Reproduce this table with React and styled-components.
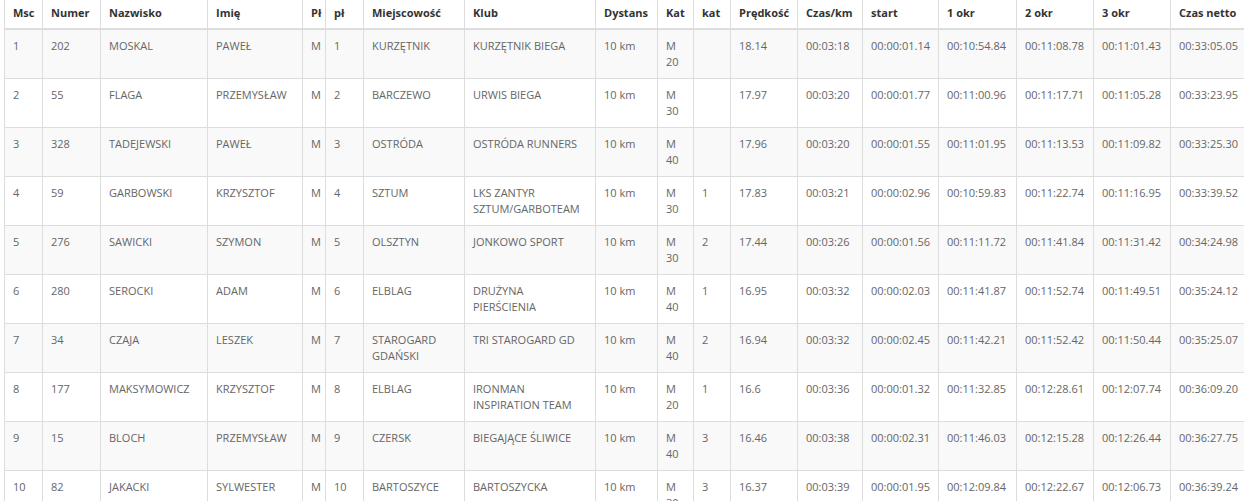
import React from "react";
import styled, {createGlobalStyle} from "styled-components";

const GlobalStyle = createGlobalStyle`
  html, body {
    margin: 0;
    padding: 0;
    background: #fff;
  }
  body {
    font-family: "Open Sans", "Liberation Sans", sans-serif;
    font-size: 11px;
    line-height: 16px;
    color: #666;
  }
`;

const Page = styled.div`
  width: 1244px;
  height: 501px;
  overflow: hidden;
  padding-left: 4px;
  box-sizing: border-box;
`;

const Table = styled.table`
  width: 1247px;
  table-layout: fixed;
  border-collapse: collapse;
  border-spacing: 0;
  border-left: 1px solid #ddd;
`;

const Col = styled.col`
  width: ${(p) => p.$w}px;
`;

const HeadCell = styled.th`
  padding: 5px 8px 7px;
  text-align: left;
  font-weight: 700;
  color: #333;
  white-space: nowrap;
  border-left: 1px solid #ddd;
  border-bottom: 2px solid #ddd;
  vertical-align: bottom;
`;

const Row = styled.tr`
  background: ${(p) => (p.$striped ? "#f9f9f9" : "#fff")};
`;

const Cell = styled.td`
  padding: 8px;
  height: 32px;
  vertical-align: top;
  border: 1px solid #ddd;
  border-top: 0;
`;

const columns = [
    ["Msc", 38], ["Numer", 58], ["Nazwisko", 107], ["Imię", 95], ["Pł", 23], ["pł", 38],
    ["Miejscowość", 101], ["Klub", 131], ["Dystans", 62], ["Kat", 36], ["kat", 37],
    ["Prędkość", 67], ["Czas/km", 65], ["start", 76], ["1 okr", 78], ["2 okr", 77],
    ["3 okr", 77], ["Czas netto", 80],
];

const results = [
    ["1", "202", "MOSKAL", "PAWEŁ", "M", "1", "KURZĘTNIK", "KURZĘTNIK BIEGA", "10 km", "M 20", "", "18.14", "00:03:18", "00:00:01.14", "00:10:54.84", "00:11:08.78", "00:11:01.43", "00:33:05.05"],
    ["2", "55", "FLAGA", "PRZEMYSŁAW", "M", "2", "BARCZEWO", "URWIS BIEGA", "10 km", "M 30", "", "17.97", "00:03:20", "00:00:01.77", "00:11:00.96", "00:11:17.71", "00:11:05.28", "00:33:23.95"],
    ["3", "328", "TADEJEWSKI", "PAWEŁ", "M", "3", "OSTRÓDA", "OSTRÓDA RUNNERS", "10 km", "M 40", "", "17.96", "00:03:20", "00:00:01.55", "00:11:01.95", "00:11:13.53", "00:11:09.82", "00:33:25.30"],
    ["4", "59", "GARBOWSKI", "KRZYSZTOF", "M", "4", "SZTUM", "LKS ZANTYR SZTUM/GARBOTEAM", "10 km", "M 30", "1", "17.83", "00:03:21", "00:00:02.96", "00:10:59.83", "00:11:22.74", "00:11:16.95", "00:33:39.52"],
    ["5", "276", "SAWICKI", "SZYMON", "M", "5", "OLSZTYN", "JONKOWO SPORT", "10 km", "M 30", "2", "17.44", "00:03:26", "00:00:01.56", "00:11:11.72", "00:11:41.84", "00:11:31.42", "00:34:24.98"],
    ["6", "280", "SEROCKI", "ADAM", "M", "6", "ELBLAG", "DRUŻYNA PIERŚCIENIA", "10 km", "M 40", "1", "16.95", "00:03:32", "00:00:02.03", "00:11:41.87", "00:11:52.74", "00:11:49.51", "00:35:24.12"],
    ["7", "34", "CZAJA", "LESZEK", "M", "7", "STAROGARD GDAŃSKI", "TRI STAROGARD GD", "10 km", "M 40", "2", "16.94", "00:03:32", "00:00:02.45", "00:11:42.21", "00:11:52.42", "00:11:50.44", "00:35:25.07"],
    ["8", "177", "MAKSYMOWICZ", "KRZYSZTOF", "M", "8", "ELBLAG", "IRONMAN INSPIRATION TEAM", "10 km", "M 20", "1", "16.6", "00:03:36", "00:00:01.32", "00:11:32.85", "00:12:28.61", "00:12:07.74", "00:36:09.20"],
    ["9", "15", "BLOCH", "PRZEMYSŁAW", "M", "9", "CZERSK", "BIEGAJĄCE ŚLIWICE", "10 km", "M 40", "3", "16.46", "00:03:38", "00:00:02.31", "00:11:46.03", "00:12:15.28", "00:12:26.44", "00:36:27.75"],
    ["10", "82", "JAKACKI", "SYLWESTER", "M", "10", "BARTOSZYCE", "BARTOSZYCKA", "10 km", "M 30", "3", "16.37", "00:03:39", "00:00:01.95", "00:12:09.84", "00:12:22.67", "00:12:06.73", "00:36:39.24"],
];

const App = () => {
    return (
        <Page>
            <GlobalStyle/>
            <Table>
                <colgroup>
                    {columns.map(([name, w]) => <Col key={name} $w={w}/>)}
                </colgroup>
                <thead>
                <tr>
                    {columns.map(([name]) => <HeadCell key={name}>{name}</HeadCell>)}
                </tr>
                </thead>
                <tbody>
                {results.map((row, i) => (
                    <Row key={row[0]} $striped={i % 2 === 0}>
                        {row.map((value, j) => <Cell key={j}>{value}</Cell>)}
                    </Row>
                ))}
                </tbody>
            </Table>
        </Page>
    );
};

export default App;
